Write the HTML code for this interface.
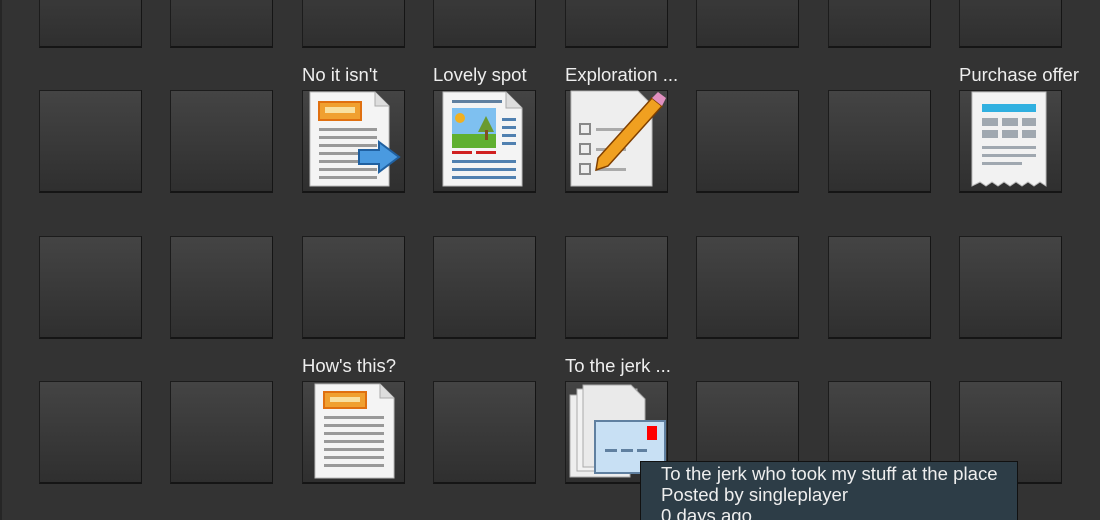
<!DOCTYPE html>
<html style="overflow:hidden"><head><style>
html,body{height:520px}
body{margin:0;width:1100px;height:520px;background:#333;overflow:hidden;position:relative;font-family:"Liberation Sans",sans-serif}
.edge{position:absolute;left:0;top:0;width:2px;height:520px;background:#262626}
.t{position:absolute;width:101px;height:100px;border:1px solid #1c1c1c;border-right-color:#151515;border-bottom:2px solid #151515;background:linear-gradient(#444,#2f2f2f)}
.l{position:absolute;color:#eee;font-size:18.5px;white-space:nowrap}
svg{position:absolute}
.tip{position:absolute;left:640px;top:461px;width:378px;height:59px;overflow:hidden;background:#2d3d47;border:1px solid #111;border-bottom:none;color:#eee;font-size:18.6px;line-height:21px;padding:1px 0 0 20px;box-sizing:border-box}
</style></head><body>
<div class="edge"></div>
<div id="g"></div>
<script>
var xs=[39,170,302,433,565,696,828,959],ys=[-55,90,236,381],h='';
ys.forEach(function(y){xs.forEach(function(x){h+='<div class="t" style="left:'+x+'px;top:'+y+'px"></div>'})});
document.getElementById('g').innerHTML=h;
</script>
<div class="l" style="left:302px;top:64px">No it isn't</div>
<div class="l" style="left:433px;top:64px">Lovely spot</div>
<div class="l" style="left:565px;top:64px">Exploration ...</div>
<div class="l" style="left:959px;top:64px">Purchase offer</div>
<div class="l" style="left:302px;top:355px">How's this?</div>
<div class="l" style="left:565px;top:355px">To the jerk ...</div>

<svg style="left:307px;top:90px" width="96" height="100">
<path d="M3 2H68L82 16V96H3Z" fill="#f4f4f4" stroke="#bbb"/><path d="M68 2V16H82" fill="#ddd" stroke="#aaa"/>
<rect x="12" y="12" width="42" height="18" fill="#f0a030" stroke="#e07010" stroke-width="2"/><rect x="18" y="17" width="30" height="6" fill="#f8e0a0"/>
<g fill="#999"><rect x="12" y="38" width="58" height="3"/><rect x="12" y="46" width="58" height="3"/><rect x="12" y="54" width="58" height="3"/><rect x="12" y="62" width="58" height="3"/><rect x="12" y="70" width="40" height="3"/><rect x="12" y="78" width="58" height="3"/><rect x="12" y="86" width="58" height="3"/></g>
<path d="M52 60H72V52L92 67L72 82V74H52Z" fill="#4a9ae0" stroke="#2060a0" stroke-width="2"/>
</svg>
<svg style="left:440px;top:90px" width="90" height="100">
<path d="M3 2H66L82 18V96H3Z" fill="#f4f4f4" stroke="#bbb"/><path d="M66 2V18H82" fill="#ddd" stroke="#aaa"/>
<rect x="12" y="10" width="50" height="3" fill="#6080a0"/>
<rect x="12" y="18" width="44" height="40" fill="#7ec0f0"/><rect x="12" y="44" width="44" height="14" fill="#60b030"/>
<circle cx="20" cy="28" r="5" fill="#f0b020"/><path d="M46 26L54 42H38Z" fill="#6a9a30"/><rect x="45" y="40" width="3" height="10" fill="#805020"/>
<rect x="12" y="61" width="20" height="3" fill="#d02020"/><rect x="36" y="61" width="20" height="3" fill="#d02020"/>
<g fill="#5080b0"><rect x="62" y="28" width="14" height="3"/><rect x="62" y="36" width="14" height="3"/><rect x="62" y="44" width="14" height="3"/><rect x="62" y="52" width="14" height="3"/><rect x="12" y="70" width="64" height="3"/><rect x="12" y="78" width="64" height="3"/><rect x="12" y="86" width="64" height="3"/></g>
</svg>
<svg style="left:568px;top:88px" width="100" height="102">
<path d="M3 3H70L84 17V98H3Z" fill="#eee" stroke="#bbb"/>
<g fill="none" stroke="#888" stroke-width="2"><rect x="12" y="36" width="10" height="10"/><rect x="12" y="56" width="10" height="10"/><rect x="12" y="76" width="10" height="10"/></g>
<g fill="#aaa"><rect x="28" y="40" width="30" height="3"/><rect x="28" y="60" width="30" height="3"/><rect x="28" y="80" width="30" height="3"/></g>
<path d="M30 70L84 10L94 18L40 78L28 82Z" fill="#f0a020" stroke="#804000" stroke-width="1.5"/><path d="M84 10L90 4L98 10L94 18Z" fill="#e090c0"/>
</svg>
<svg style="left:970px;top:90px" width="80" height="100">
<path d="M2 2H76V96L70 92L64 96L58 92L52 96L46 92L40 96L34 92L28 96L22 92L16 96L10 92L2 96Z" fill="#f2f2f2" stroke="#bbb"/>
<rect x="12" y="14" width="54" height="8" fill="#30b0e0"/>
<g fill="#a0a8b0"><rect x="12" y="28" width="16" height="8"/><rect x="32" y="28" width="16" height="8"/><rect x="52" y="28" width="14" height="8"/><rect x="12" y="40" width="16" height="8"/><rect x="32" y="40" width="16" height="8"/><rect x="52" y="40" width="14" height="8"/><rect x="12" y="56" width="54" height="3"/><rect x="12" y="64" width="54" height="3"/><rect x="12" y="72" width="40" height="3"/></g>
</svg>
<svg style="left:312px;top:382px" width="90" height="100">
<path d="M3 2H68L82 16V96H3Z" fill="#f4f4f4" stroke="#bbb"/><path d="M68 2V16H82" fill="#ddd" stroke="#aaa"/>
<rect x="12" y="10" width="42" height="16" fill="#f0a030" stroke="#e07010" stroke-width="2"/><rect x="18" y="15" width="30" height="5" fill="#f8e0a0"/>
<g fill="#999"><rect x="12" y="34" width="60" height="3"/><rect x="12" y="42" width="60" height="3"/><rect x="12" y="50" width="60" height="3"/><rect x="12" y="58" width="60" height="3"/><rect x="12" y="66" width="60" height="3"/><rect x="12" y="74" width="60" height="3"/><rect x="12" y="82" width="60" height="3"/></g>
</svg>
<svg style="left:567px;top:383px" width="100" height="98">
<rect x="3" y="12" width="60" height="82" fill="#eee" stroke="#aaa"/><rect x="10" y="6" width="60" height="82" fill="#f2f2f2" stroke="#aaa"/>
<path d="M16 2H64L78 16V84H16Z" fill="#eaeaea" stroke="#aaa"/>
<rect x="28" y="38" width="70" height="52" fill="#c8e0f4" stroke="#6080a0" stroke-width="2"/>
<rect x="80" y="43" width="10" height="14" fill="#f00"/>
<g fill="#6080a0"><rect x="38" y="66" width="12" height="3"/><rect x="54" y="66" width="12" height="3"/><rect x="70" y="66" width="10" height="3"/></g>
</svg>
<div class="tip">To the jerk who took my stuff at the place<br>Posted by singleplayer<br>0 days ago</div>
</body></html>
